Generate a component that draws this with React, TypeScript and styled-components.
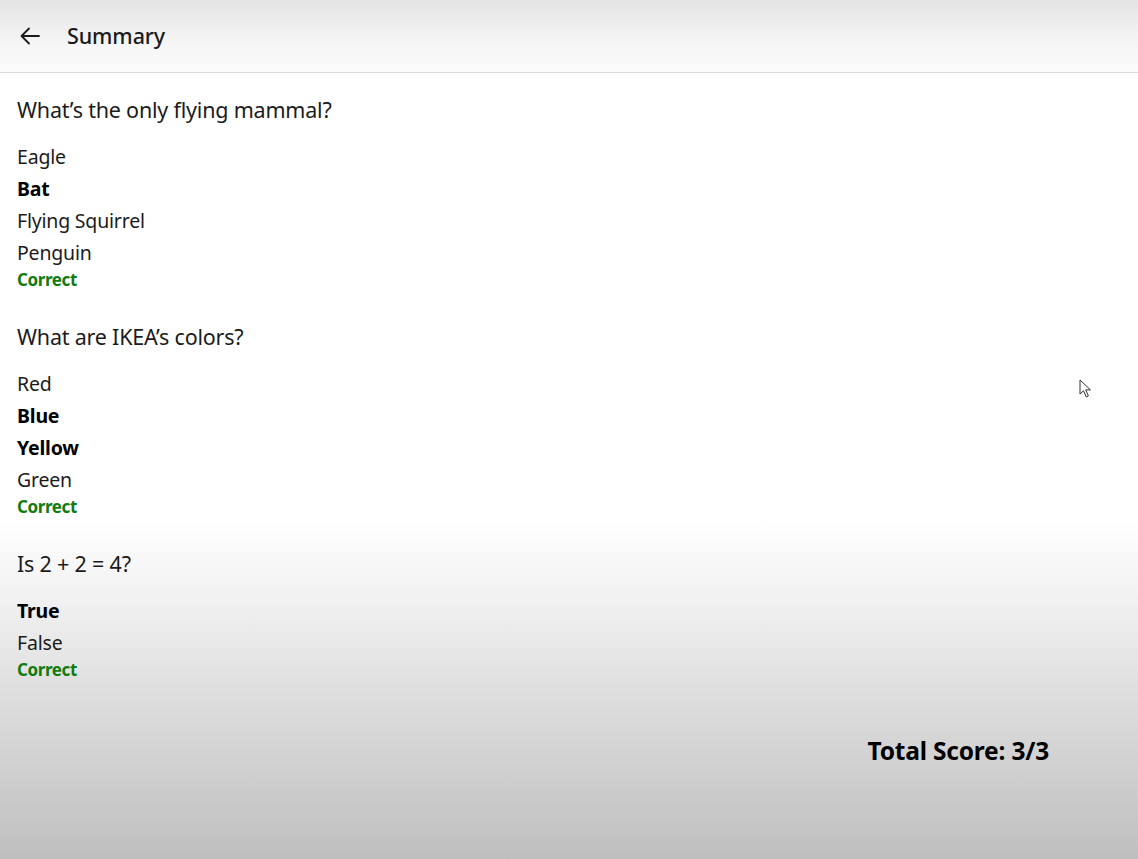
import React from 'react';
import styled, { createGlobalStyle } from 'styled-components';

const GlobalStyle = createGlobalStyle`
  html, body {
    margin: 0;
    padding: 0;
    height: 100%;
  }
  body {
    font-family: 'Noto Sans', 'Open Sans', 'Liberation Sans', sans-serif;
    color: #1b1b1b;
    background: linear-gradient(
      to bottom,
      #e4e4e4 0px,
      #f6f6f6 45px,
      #fbfbfb 72px,
      #ffffff 80px,
      #ffffff 520px,
      #f1f1f1 600px,
      #dddddd 700px,
      #cccccc 790px,
      #bfbfbf 859px
    );
    background-repeat: no-repeat;
    min-height: 859px;
  }
`;

const Page = styled.div`
  min-height: 859px;
  position: relative;
`;

const Header = styled.header`
  height: 73px;
  display: flex;
  align-items: center;
  gap: 26px;
  padding: 0 0 1px 19px;
  box-sizing: border-box;
  border-bottom: 1px solid #dcdcdc;
`;

const BackButton = styled.button`
  background: none;
  border: none;
  padding: 0;
  width: 22px;
  height: 22px;
  display: flex;
  align-items: center;
  justify-content: center;
  cursor: pointer;
  color: #1b1b1b;
`;

const Title = styled.h1`
  margin: 0;
  font-size: 21.5px;
  font-weight: 500;
  letter-spacing: -0.1px;
`;

const Content = styled.main`
  padding: 22px 89px 0 17px;
  display: flex;
  flex-direction: column;
`;

const QuestionBlock = styled.section`
  display: flex;
  flex-direction: column;
  & + & {
    margin-top: 31px;
  }
`;

const QuestionText = styled.h2`
  margin: 0 0 16px;
  font-size: 21.5px;
  line-height: 30px;
  font-weight: 400;
  letter-spacing: -0.2px;
`;

const Option = styled.div<{ $selected?: boolean }>`
  font-size: 19.5px;
  line-height: 32px;
  letter-spacing: -0.2px;
  font-weight: ${(p) => (p.$selected ? 700 : 400)};
  color: ${(p) => (p.$selected ? '#000' : '#1b1b1b')};
`;

const Verdict = styled.div<{ $correct: boolean }>`
  font-size: 17px;
  line-height: 22px;
  font-weight: 700;
  letter-spacing: -0.4px;
  color: ${(p) => (p.$correct ? '#107c10' : '#c42b1c')};
`;

const TotalScore = styled.div`
  margin-top: 55px;
  align-self: flex-end;
  font-size: 24.5px;
  line-height: 30px;
  font-weight: 700;
  color: #000;
  letter-spacing: -0.2px;
`;

const Pointer = styled.svg`
  position: absolute;
  left: 1079px;
  top: 379px;
  pointer-events: none;
`;

interface Question {
  text: string;
  options: string[];
  selected: string[];
  correct: boolean;
}

const questions: Question[] = [
  {
    text: 'What’s the only flying mammal?',
    options: ['Eagle', 'Bat', 'Flying Squirrel', 'Penguin'],
    selected: ['Bat'],
    correct: true,
  },
  {
    text: 'What are IKEA’s colors?',
    options: ['Red', 'Blue', 'Yellow', 'Green'],
    selected: ['Blue', 'Yellow'],
    correct: true,
  },
  {
    text: 'Is 2 + 2 = 4?',
    options: ['True', 'False'],
    selected: ['True'],
    correct: true,
  },
];

function App() {
  const score = questions.filter((q) => q.correct).length;

  return (
    <Page>
      <GlobalStyle />
      <Header>
        <BackButton aria-label="Back">
          <svg width="22" height="22" viewBox="0 0 22 22" fill="none">
            <path
              d="M20 11H3M10 3.5L2.5 11L10 18.5"
              stroke="currentColor"
              strokeWidth="1.8"
              strokeLinecap="round"
              strokeLinejoin="round"
            />
          </svg>
        </BackButton>
        <Title>Summary</Title>
      </Header>
      <Content>
        {questions.map((q) => (
          <QuestionBlock key={q.text}>
            <QuestionText>{q.text}</QuestionText>
            {q.options.map((o) => (
              <Option key={o} $selected={q.selected.includes(o)}>
                {o}
              </Option>
            ))}
            <Verdict $correct={q.correct}>{q.correct ? 'Correct' : 'Incorrect'}</Verdict>
          </QuestionBlock>
        ))}
        <TotalScore>
          Total Score: {score}/{questions.length}
        </TotalScore>
      </Content>
      <Pointer width="14" height="20" viewBox="0 0 14 20">
        <path
          d="M1 1V15L4.5 11.8L7.3 18L9.4 17L6.7 10.9H11.5Z"
          fill="#fff"
          stroke="#333"
          strokeWidth="1"
          strokeLinejoin="round"
        />
      </Pointer>
    </Page>
  );
}

export default App;
